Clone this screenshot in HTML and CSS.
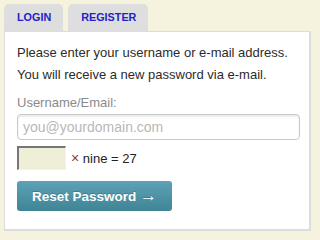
FILE: index.html
```html
<!DOCTYPE html>
<html>
<head>
<meta charset="utf-8">
<link rel="stylesheet" href="styles.css">
</head>
<body>
<div class="wrap">
  <div class="tabs">
    <a class="tab" href="#">LOGIN</a>
    <a class="tab" href="#">REGISTER</a>
  </div>
  <div class="panel">
    <p class="intro">Please enter your username or e-mail address.<br>You will receive a new password via e-mail.</p>
    <label class="label" for="user">Username/Email:</label>
    <input class="field" id="user" type="text" placeholder="you@yourdomain.com">
    <div class="captcha">
      <input class="cap-input" type="text">
      <span class="cap-text"><span class="times">×</span> nine = 27</span>
    </div>
    <button class="btn" type="button">Reset Password <span class="arrow">→</span></button>
  </div>
</div>
</body>
</html>
```

FILE: styles.css
```css
html, body {
  margin: 0;
  padding: 0;
  background: #f5f3dd;
}
body {
  font-family: "Liberation Sans", Arial, sans-serif;
  color: #2b2b2b;
}
.wrap {
  padding: 4px 0 0 4px;
  width: 307px;
}
.tabs {
  display: flex;
  gap: 5px;
}
.tab {
  display: block;
  height: 27px;
  line-height: 27px;
  padding: 0 12px 0 13px;
  background: #dedede;
  border-radius: 5px 5px 0 0;
  color: #2323c8;
  font-weight: bold;
  font-size: 10.8px;
  text-decoration: none;
}
.panel {
  background: #fff;
  border-style: solid;
  border-color: #dcdcdc;
  border-width: 1px 2px 2px 1px;
  padding: 10px 10px 18px 12px;
}
.intro {
  margin: 0;
  font-size: 13px;
  line-height: 22px;
  color: #2b2b2b;
}
.label {
  display: block;
  margin-top: 8px;
  margin-bottom: 3px;
  font-size: 13px;
  line-height: 17px;
  color: #8a8a8a;
}
.field {
  display: block;
  box-sizing: border-box;
  width: 283px;
  height: 26px;
  margin: 0;
  padding: 0 5px;
  border: 1px solid #c8c8c8;
  border-radius: 4px;
  box-shadow: inset 0 2px 2px rgba(0,0,0,0.08);
  font-family: "Liberation Sans", Arial, sans-serif;
  font-size: 14px;
  color: #333;
  background: #fff;
}
.field::placeholder {
  color: #b8b8b8;
}
.captcha {
  display: flex;
  align-items: center;
  gap: 5px;
  margin-top: 6px;
}
.cap-input {
  box-sizing: border-box;
  width: 49px;
  height: 24px;
  margin: 0;
  padding: 0;
  background: #efefd8;
  border-style: solid;
  border-width: 2px 1px 1px 2px;
  border-color: #767676 #f2f2f2 #f2f2f2 #767676;
}
.cap-text {
  font-size: 13px;
  color: #222;
}
.times {
  color: #8b3a33;
  font-size: 14px;
}
.btn {
  display: block;
  margin-top: 11px;
  width: 155px;
  height: 30px;
  padding: 0 0 1px;
  border: 0;
  border-radius: 3px;
  background: linear-gradient(#5da1b6, #3f8595);
  color: #fff;
  font-family: "Liberation Sans", Arial, sans-serif;
  font-weight: bold;
  font-size: 13.5px;
  text-shadow: 0 -1px 0 rgba(0,0,0,0.2);
}
.arrow {
  font-family: "Liberation Sans", Arial, sans-serif;
  font-weight: normal;
  font-size: 17px;
  line-height: 1;
}
```
